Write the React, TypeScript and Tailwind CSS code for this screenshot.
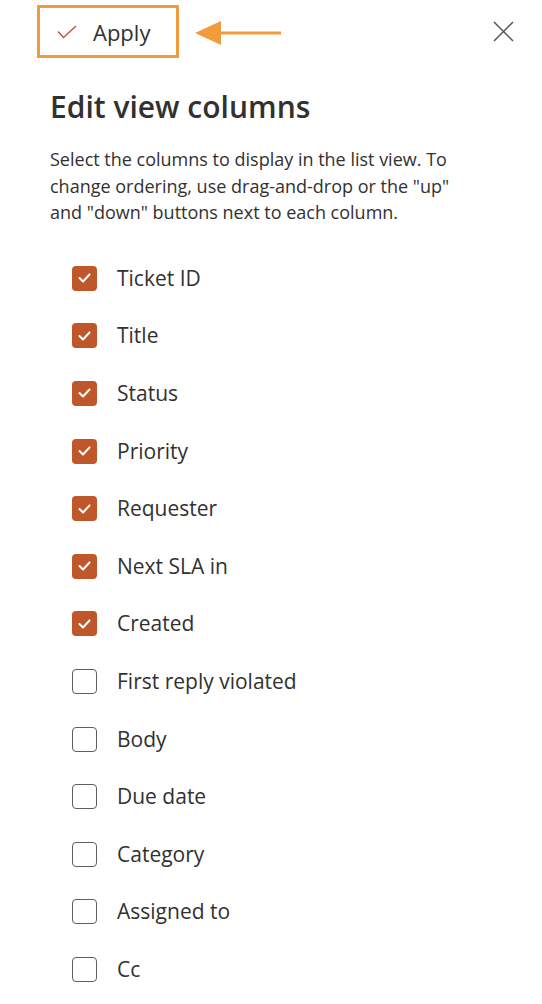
import React from "react";

const items: [string, boolean][] = [
  ["Ticket ID", true],
  ["Title", true],
  ["Status", true],
  ["Priority", true],
  ["Requester", true],
  ["Next SLA in", true],
  ["Created", true],
  ["First reply violated", false],
  ["Body", false],
  ["Due date", false],
  ["Category", false],
  ["Assigned to", false],
  ["Cc", false],
];

export default function App() {
  return (
    <div
      className="w-[542px] h-[1004px] bg-white overflow-hidden text-[#323130]"
      style={{ fontFamily: '"Open Sans", "Noto Sans", sans-serif' }}
    >
      <div className="relative h-[62px]">
        <div className="absolute left-[37px] top-[5px] w-[142px] h-[53px] border-[3px] border-[#F19B3D] flex items-center pl-[17px]">
          <svg width="20" height="14" viewBox="0 0 20 14" className="mr-[16px]">
            <path d="M1 6.5 L6.5 12.5 L19 1" fill="none" stroke="#C0572A" strokeWidth="1.4" />
          </svg>
          <span className="text-[22px] leading-none text-[#323130]">Apply</span>
        </div>
        <svg className="absolute left-[194px] top-[20px]" width="90" height="26" viewBox="0 0 90 26">
          <polygon points="1,13 27,1 27,25" fill="#F19B3D" />
          <rect x="25" y="11.5" width="62" height="3" fill="#F19B3D" />
        </svg>
        <svg className="absolute left-[493px] top-[21px]" width="21" height="21" viewBox="0 0 21 21">
          <path d="M1 1 L20 20 M20 1 L1 20" stroke="#555" strokeWidth="1.5" />
        </svg>
      </div>
      <div className="px-[50px]">
        <h1 className="text-[30px] font-semibold leading-[36px] mt-[27px]">Edit view columns</h1>
        <p className="w-[414px] text-[18px] leading-[26.5px] mt-[21px] text-[#323130]">
          Select the columns to display in the list view. To change ordering, use drag-and-drop or the "up" and "down" buttons next to each column.
        </p>
      </div>
      <div className="mt-[24px] pl-[72px]">
        {items.map(([label, checked]) => (
          <div key={label} className="h-[57.6px] flex items-center">
            {checked ? (
              <div className="w-[25px] h-[25px] rounded-[4px] bg-[#C0572A] flex items-center justify-center">
                <svg width="13" height="10" viewBox="0 0 13 10">
                  <path d="M1.5 5 L5 8.5 L11.5 1.5" fill="none" stroke="white" strokeWidth="2" strokeLinecap="round" strokeLinejoin="round" />
                </svg>
              </div>
            ) : (
              <div className="w-[25px] h-[25px] rounded-[4px] border border-[#605E5C] bg-white" />
            )}
            <span className="ml-[20px] text-[21px] leading-none">{label}</span>
          </div>
        ))}
      </div>
    </div>
  );
}
